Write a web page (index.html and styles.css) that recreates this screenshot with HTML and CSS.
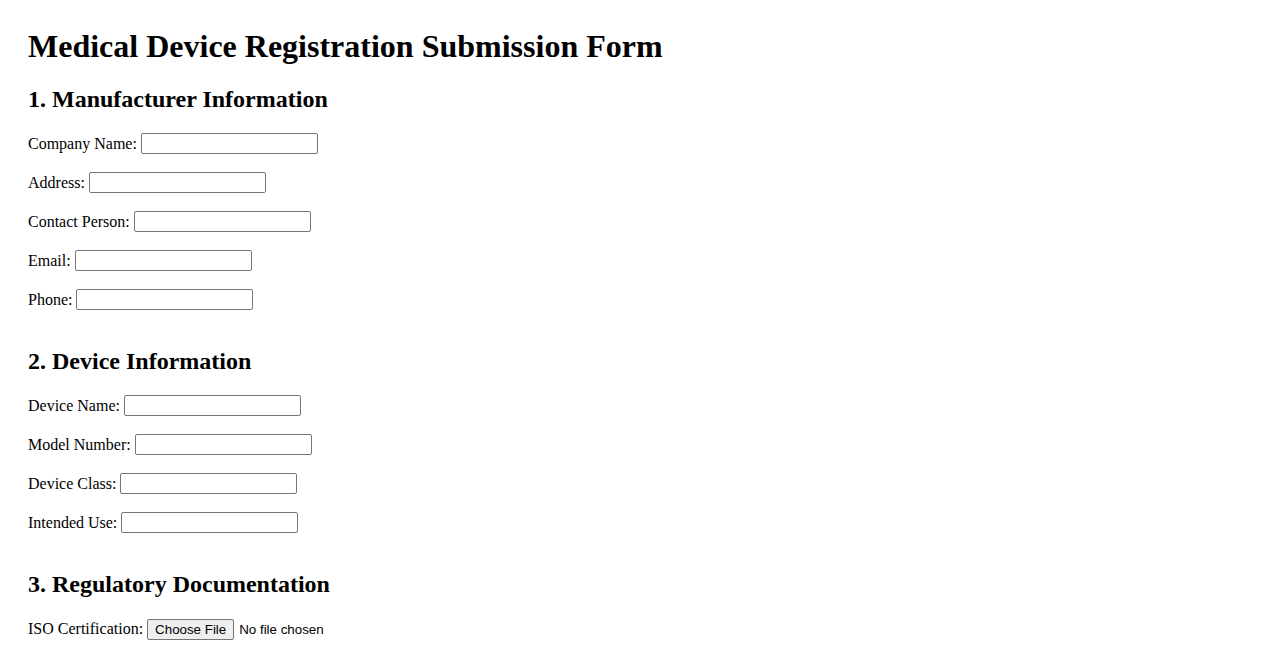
FILE: index.html
```html
<!DOCTYPE html>
<html lang="en">
<head>
    <meta charset="UTF-8">
    <meta name="viewport" content="width=device-width, initial-scale=1.0">
    <title>Medical Device Registration Submission Form</title>
    <link rel="stylesheet" href="styles.css">
</head>
<body>
    <h1>Medical Device Registration Submission Form</h1>

    <form id="registrationForm">
        <!-- 1. Manufacturer -->
        <div class="section">
            <h2>1. Manufacturer Information</h2>
            <p><label for="companyName">Company Name:</label> <input type="text" id="companyName" name="companyName"></p>
            <p><label for="address">Address:</label> <input type="text" id="address" name="address"></p>
            <p><label for="contactPerson">Contact Person:</label> <input type="text" id="contactPerson" name="contactPerson"></p>
            <p><label for="email">Email:</label> <input type="email" id="email" name="email"></p>
            <p><label for="phone">Phone:</label> <input type="tel" id="phone" name="phone"></p>
        </div>

        <!-- 2. Device -->
        <div class="section">
            <h2>2. Device Information</h2>
            <p><label for="deviceName">Device Name:</label> <input type="text" id="deviceName" name="deviceName"></p>
            <p><label for="modelNumber">Model Number:</label> <input type="text" id="modelNumber" name="modelNumber"></p>
            <p><label for="deviceClass">Device Class:</label> <input type="text" id="deviceClass" name="deviceClass"></p>
            <p><label for="intendedUse">Intended Use:</label> <input type="text" id="intendedUse" name="intendedUse"></p>
        </div>

        <!-- 3. Documentation -->
        <div class="section">
            <h2>3. Regulatory Documentation</h2>
            <p><label for="isoCert">ISO Certification:</label> <input type="file" id="isoCert" name="isoCert"></p>
        </div>
    </form>
</body>
</html>
```

FILE: styles.css
```css
/* Genel */
body {
    font-family: 'Liberation Serif', 'Times New Roman', serif;
    font-size: 16px;
    color: #000;
    background: #fff;
    margin: 0;
    padding: 28px;
}

h1 {
    font-size: 32px;
    margin: 0 0 21px;
}

h2 {
    font-size: 24px;
    margin: 20px 0 19px;
}

p {
    margin: 16px 0;
    line-height: 23px;
}

.section {
    padding-bottom: 17px;
}

.section p:last-child {
    margin-bottom: 0;
}

input[type="text"],
input[type="email"],
input[type="tel"] {
    width: 177px;
    height: 21px;
    box-sizing: border-box;
    border: 1px solid #767676;
    border-radius: 2px;
    padding: 1px 2px;
    font-family: 'Liberation Sans', Arial, sans-serif;
    font-size: 13.33px;
    vertical-align: 1px;
}

input[type="file"] {
    font-family: 'Liberation Sans', Arial, sans-serif;
    font-size: 13.33px;
}

input[type="file"]::file-selector-button {
    font-family: 'Liberation Sans', Arial, sans-serif;
    font-size: 13.33px;
    background: #efefef;
    border: 1px solid #767676;
    border-radius: 2px;
    padding: 1px 7px;
    margin-right: 5px;
    height: 21px;
}
```
